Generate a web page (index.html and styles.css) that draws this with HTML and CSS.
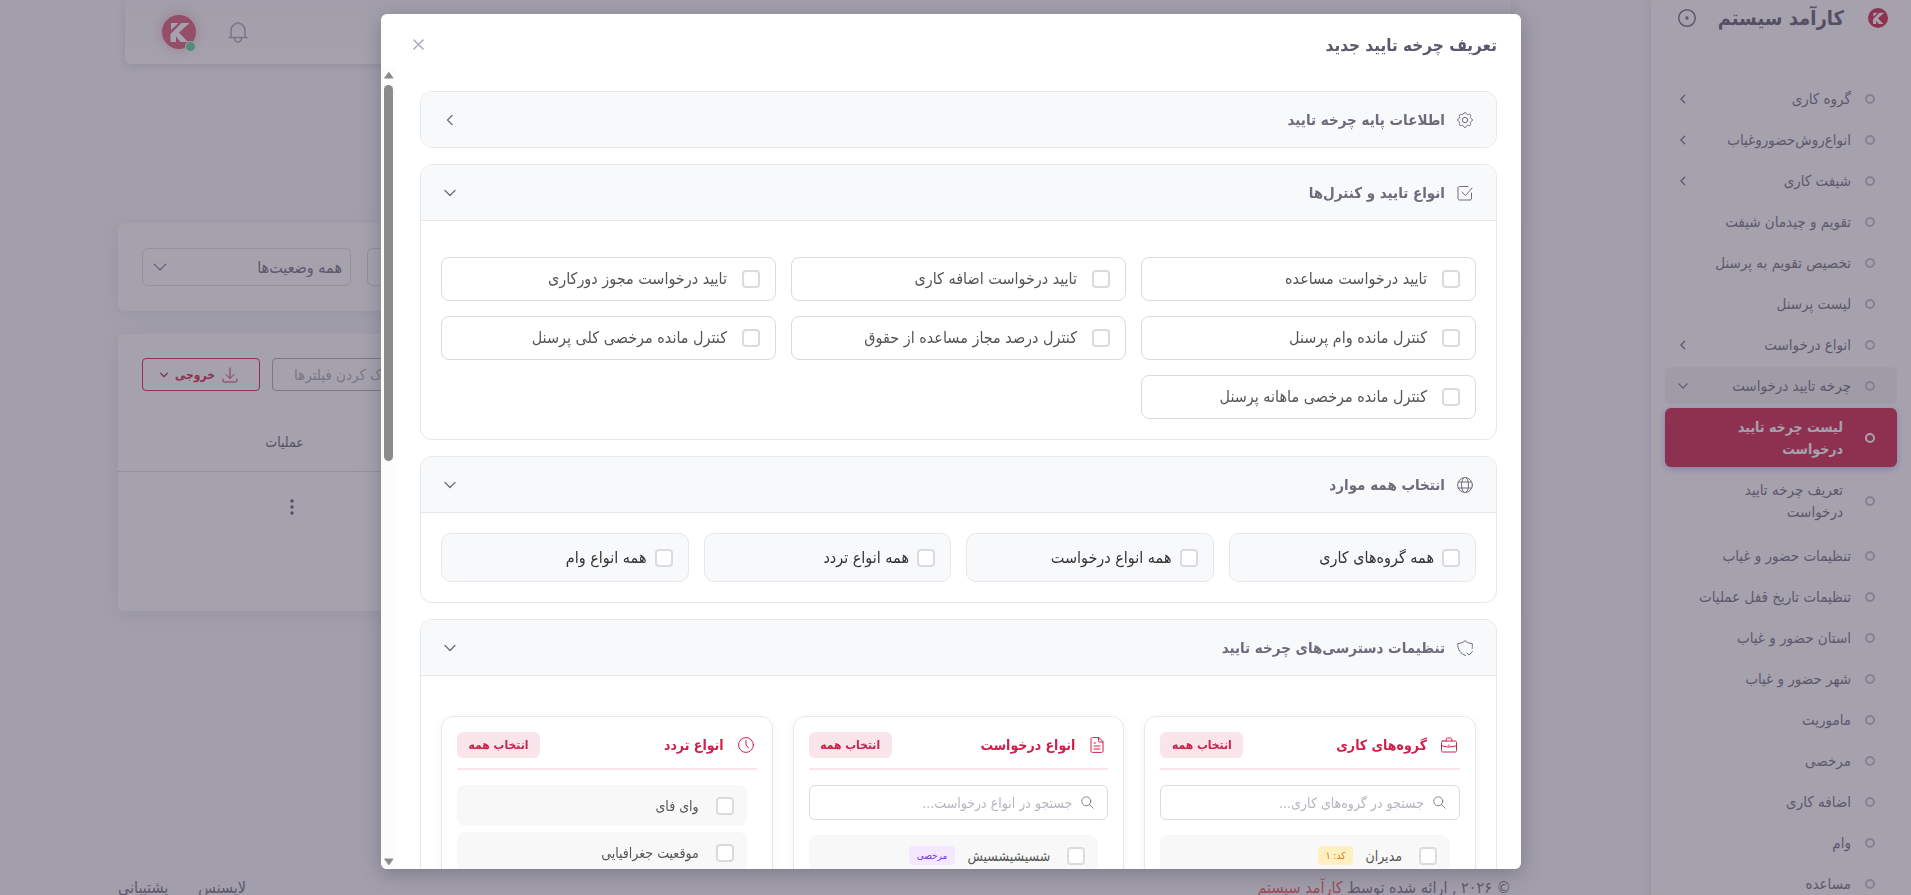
FILE: index.html
```html
<!DOCTYPE html>
<html lang="fa" dir="rtl">
<head>
  <meta charset="UTF-8" />
  <title>لیست چرخه تایید درخواست</title>
  <link rel="stylesheet" href="styles.css">
</head>
<body>
  <svg class="sprite" aria-hidden="true">
    <symbol id="chev-left" viewBox="0 0 12 12"><path d="M8 1.5 3.5 6 8 10.5" /></symbol>
    <symbol id="chev-down" viewBox="0 0 12 12"><path d="M1 3.5 6 8.5 11 3.5" /></symbol>
    <symbol id="search" viewBox="0 0 16 16"><circle cx="6.5" cy="6.5" r="5.5" /><path d="M10.5 10.5 15 15" /></symbol>
    <symbol id="logo" viewBox="0 0 34 34">
      <circle cx="17" cy="17" r="17" fill="#d01f48" />
      <path fill="#fff" d="M9 8h7.5L9 15zM19.500 8h8L17 17.5l9 9.500h-7.5L14 21.5V27H8.5v-8z" />
    </symbol>
  </svg>

  <div class="layout">
    <aside class="sidebar">
      <div class="app-brand">
        <svg class="brand-logo"><use href="#logo" /></svg>
        <span class="brand-text">کارآمد سیستم</span>
        <button class="menu-toggle" aria-label="منو">
          <svg viewBox="0 0 20 20"><circle cx="10" cy="10" r="8.3" /><circle class="dot" cx="10" cy="10" r="1.7" /></svg>
        </button>
      </div>
      <nav class="menu">
        <a class="menu-item" href="#"><i></i><span>گروه کاری</span><svg><use href="#chev-left" /></svg></a>
        <a class="menu-item" href="#"><i></i><span>انواع‌روش‌حضوروغیاب</span><svg><use href="#chev-left" /></svg></a>
        <a class="menu-item" href="#"><i></i><span>شیفت کاری</span><svg><use href="#chev-left" /></svg></a>
        <a class="menu-item" href="#"><i></i><span>تقویم و چیدمان شیفت</span></a>
        <a class="menu-item" href="#"><i></i><span>تخصیص تقویم به پرسنل</span></a>
        <a class="menu-item" href="#"><i></i><span>لیست پرسنل</span></a>
        <a class="menu-item" href="#"><i></i><span>انواع درخواست</span><svg><use href="#chev-left" /></svg></a>
        <a class="menu-item open" href="#"><i></i><span>چرخه تایید درخواست</span><svg><use href="#chev-down" /></svg></a>
        <a class="menu-item sub active" href="#"><i></i><span>لیست چرخه تایید درخواست</span></a>
        <a class="menu-item sub" href="#"><i></i><span>تعریف چرخه تایید درخواست</span></a>
        <a class="menu-item" href="#"><i></i><span>تنظیمات حضور و غیاب</span></a>
        <a class="menu-item" href="#"><i></i><span>تنظیمات تاریخ قفل عملیات</span></a>
        <a class="menu-item" href="#"><i></i><span>استان حضور و غیاب</span></a>
        <a class="menu-item" href="#"><i></i><span>شهر حضور و غیاب</span></a>
        <a class="menu-item" href="#"><i></i><span>ماموریت</span></a>
        <a class="menu-item" href="#"><i></i><span>مرخصی</span></a>
        <a class="menu-item" href="#"><i></i><span>اضافه کاری</span></a>
        <a class="menu-item" href="#"><i></i><span>وام</span></a>
        <a class="menu-item" href="#"><i></i><span>مساعده</span></a>
      </nav>
    </aside>

    <div class="page">
      <header class="topbar">
        <button class="bell" aria-label="اعلان‌ها">
          <svg viewBox="0 0 20 22"><path d="M1 16.5h18M3 16.5V9.5C3 5.5 6 3 8.5 2.6 9 1.2 11 1.2 11.5 2.6 14 3 17 5.5 17 9.5v7M6.5 17c.3 5.2 6.7 5.2 7 0" /></svg>
        </button>
        <div class="avatar">
          <svg><use href="#logo" /></svg>
          <span class="online"></span>
        </div>
      </header>

      <main>
        <section class="card filters">
          <select class="status-select" aria-label="نوع"><option></option></select>
          <div class="select-wrap">
            <select class="status-select" aria-label="وضعیت"><option>همه وضعیت‌ها</option></select>
            <svg><use href="#chev-down" /></svg>
          </div>
        </section>

        <section class="card table-card">
          <div class="toolbar">
            <button class="btn btn-clear">پاک کردن فیلترها</button>
            <button class="btn btn-export">
              <svg class="download" viewBox="0 0 16 16"><path d="M8 1v10M4 7.5 8 11.5l4-4M1 12v1.5C1 14.5 1.5 15 2.5 15h11c1 0 1.5-.5 1.5-1.5V12" /></svg>
              خروجی
              <svg class="caret"><use href="#chev-down" /></svg>
            </button>
          </div>
          <table class="list">
            <thead><tr><th></th><th>عملیات</th></tr></thead>
            <tbody><tr><td></td><td><button class="dots" aria-label="عملیات"><svg viewBox="0 0 4 16"><circle cx="2" cy="2" r="1.7" /><circle cx="2" cy="8" r="1.7" /><circle cx="2" cy="14" r="1.7" /></svg></button></td></tr></tbody>
          </table>
        </section>
      </main>

      <footer class="footer">
        <div>© ۲۰۲۶ , ارائه شده توسط <a class="company" href="#">کارآمد سیستم</a></div>
        <div class="footer-links"><a href="#">لایسنس</a><a href="#">پشتیبانی</a></div>
      </footer>
    </div>
  </div>

  <div class="overlay">
    <div class="modal" role="dialog" aria-labelledby="modalTitle">
      <div class="modal-header">
        <h2 id="modalTitle">تعریف چرخه تایید جدید</h2>
        <button class="close" aria-label="بستن"><svg viewBox="0 0 12 12"><path d="M1 1l10 10M11 1 1 11" /></svg></button>
      </div>

      <div class="modal-main">
        <div class="modal-body">
          <section class="panel">
            <button class="panel-head">
              <svg class="head-icon" viewBox="0 0 16 16"><circle cx="8" cy="8" r="2.7" /><path d="M6.5 1.7C7 .2 9 .2 9.5 1.7c.3.9 1.2 1.2 2 .8 1.4-.7 2.7.6 2 2-.4.8-.1 1.7.8 2 1.5.5 1.5 2.5 0 3-.9.3-1.2 1.2-.8 2 .7 1.4-.6 2.7-2 2-.8-.4-1.7-.1-2 .8-.5 1.5-2.5 1.5-3 0-.3-.9-1.2-1.2-2-.8-1.4.7-2.7-.6-2-2 .4-.8.1-1.7-.8-2-1.5-.5-1.5-2.5 0-3 .9-.3 1.2-1.2.8-2-.7-1.4.6-2.7 2-2 .8.4 1.7.1 2-.8z" /></svg>
              <span>اطلاعات پایه چرخه تایید</span>
              <svg class="arrow"><use href="#chev-left" /></svg>
            </button>
          </section>

          <section class="panel">
            <button class="panel-head">
              <svg class="head-icon" viewBox="0 0 16 16"><path d="M11 1.5H2.5c-1 0-1.5.5-1.5 1.5v10.5c0 1 .5 1.5 1.5 1.5H13c1 0 1.500-.5 1.500-1.5V8M5 7l3.5 3.5L15 3" /></svg>
              <span>انواع تایید و کنترل‌ها</span>
              <svg class="arrow"><use href="#chev-down" /></svg>
            </button>
            <div class="panel-body spaced checks">
              <label class="check"><input type="checkbox"><span>تایید درخواست مساعده</span></label>
              <label class="check"><input type="checkbox"><span>تایید درخواست اضافه کاری</span></label>
              <label class="check"><input type="checkbox"><span>تایید درخواست مجوز دورکاری</span></label>
              <label class="check"><input type="checkbox"><span>کنترل مانده وام پرسنل</span></label>
              <label class="check"><input type="checkbox"><span>کنترل درصد مجاز مساعده از حقوق</span></label>
              <label class="check"><input type="checkbox"><span>کنترل مانده مرخصی کلی پرسنل</span></label>
              <label class="check"><input type="checkbox"><span>کنترل مانده مرخصی ماهانه پرسنل</span></label>
            </div>
          </section>

          <section class="panel">
            <button class="panel-head">
              <svg class="head-icon" viewBox="0 0 16 16"><circle cx="8" cy="8" r="7.4" /><path d="M1.500 5h13M1.500 11h13M6.500 .8C3.800 5 3.800 11 6.500 15.200M9.500 .8C12.200 5 12.200 11 9.500 15.200" /></svg>
              <span>انتخاب همه موارد</span>
              <svg class="arrow"><use href="#chev-down" /></svg>
            </button>
            <div class="panel-body all-grid">
              <label class="check-all"><input type="checkbox"><span>همه گروه‌های کاری</span></label>
              <label class="check-all"><input type="checkbox"><span>همه انواع درخواست</span></label>
              <label class="check-all"><input type="checkbox"><span>همه انواع تردد</span></label>
              <label class="check-all"><input type="checkbox"><span>همه انواع وام</span></label>
            </div>
          </section>

          <section class="panel">
            <button class="panel-head">
              <svg class="head-icon" viewBox="0 0 16 16"><path d="M8.5 15.5C3.5 14 .3 9 .8 3.5 3.500 3.5 6 2.5 8 .7c2 1.8 4.500 2.8 7.200 2.8.3 2.5 .2 3.500 0 5M10 13l2 2 3.5-3.5" /></svg>
              <span>تنظیمات دسترسی‌های چرخه تایید</span>
              <svg class="arrow"><use href="#chev-down" /></svg>
            </button>
            <div class="panel-body access">
              <div class="access-card">
                <div class="access-head">
                  <svg viewBox="0 0 16 16"><path d="M2 4h12c1 0 1.5.5 1.5 1.5v8c0 1-.5 1.5-1.5 1.5H2c-1 0-1.5-.5-1.5-1.5v-8C.5 4.5 1 4 2 4zM5 4c0-2 .5-3 1.5-3h3c1 0 1.5 1 1.5 3M.5 8.5c4.5 2 10.5 2 15 0M8 8v.6" /></svg>
                  <h3>گروه‌های کاری</h3>
                  <button class="select-all">انتخاب همه</button>
                </div>
                <div class="search">
                  <svg><use href="#search" /></svg>
                  <input type="text" aria-label="جستجو در گروه‌های کاری" placeholder="جستجو در گروه‌های کاری...">
                </div>
                <div class="rows">
                  <label class="row"><input type="checkbox"><span>مدیران</span><b class="tag code">کد: ۱</b></label>
                </div>
              </div>

              <div class="access-card">
                <div class="access-head">
                  <svg viewBox="0 0 16 16"><path d="M9.5.6H3.5C2.3.6 2 1 2 2v12c0 1 .4 1.4 1.5 1.4h9c1.1 0 1.5-.4 1.5-1.4V5zM9.5.6V3.5c0 1 .5 1.5 1.5 1.5h3M5 6h1.5M5 9h6M5 12h6" /></svg>
                  <h3>انواع درخواست</h3>
                  <button class="select-all">انتخاب همه</button>
                </div>
                <div class="search">
                  <svg><use href="#search" /></svg>
                  <input type="text" aria-label="جستجو در انواع درخواست" placeholder="جستجو در انواع درخواست...">
                </div>
                <div class="rows">
                  <label class="row"><input type="checkbox"><span>شسیشیشسیش</span><b class="tag leave">مرخصی</b></label>
                </div>
              </div>

              <div class="access-card">
                <div class="access-head">
                  <svg viewBox="0 0 16 16"><circle cx="8" cy="8" r="7.4" /><path d="M8 3.5V8l2.5 3" /></svg>
                  <h3>انواع تردد</h3>
                  <button class="select-all">انتخاب همه</button>
                </div>
                <div class="rows">
                  <label class="row"><input type="checkbox"><span>وای فای</span></label>
                  <label class="row"><input type="checkbox"><span>موقعیت جغرافیایی</span></label>
                </div>
              </div>
            </div>
          </section>
        </div>

        <div class="scrollbar" aria-hidden="true">
          <svg viewBox="0 0 10 8"><path d="M5 1 9 6.5H1z" /></svg>
          <div class="track"><div class="thumb"></div></div>
          <svg viewBox="0 0 10 8"><path d="M5 7 9 1.5H1z" /></svg>
        </div>
      </div>
    </div>
  </div>
</body>
</html>
```

FILE: styles.css
```css
* {
  box-sizing: border-box;
}

body {
  margin: 0;
  height: 100vh;
  overflow: hidden;
  background-color: #f8f7fa;
  color: #6f6b7d;
  font-family: "DejaVu Sans Condensed", "DejaVu Sans", sans-serif;
  font-size: 15px;
  line-height: 22px;
}

button, input, select {
  font-family: inherit;
  font-size: inherit;
  color: inherit;
}

button {
  border: none;
  background: none;
  padding: 0;
  cursor: pointer;
}

a {
  color: inherit;
  text-decoration: none;
}

svg {
  fill: none;
  stroke: currentColor;
  stroke-linecap: round;
  stroke-linejoin: round;
  flex-shrink: 0;
}

.sprite {
  display: none;
}

.layout {
  display: flex;
  height: 100vh;
}

/* sidebar */

.sidebar {
  width: 260px;
  flex-shrink: 0;
  background-color: #fff;
  box-shadow: 0 2px 8px rgba(75, 70, 92, 0.14);
  overflow: hidden;
}

.app-brand {
  display: flex;
  align-items: center;
  height: 36px;
  padding: 0 23px 0 26px;
  margin-bottom: 44px;
}

.brand-logo {
  width: 20px;
  height: 20px;
  stroke: none;
}

.brand-text {
  flex: 1;
  margin-right: 24px;
  color: #5d596c;
  font-size: 20px;
  font-weight: bold;
}

.menu-toggle svg {
  display: block;
  width: 20px;
  height: 20px;
  stroke-width: 1.5;
}

.menu-toggle .dot {
  fill: currentColor;
  stroke: none;
}

.menu {
  display: flex;
  flex-direction: column;
  gap: 4px;
  padding: 0 14px;
}

.menu-item {
  display: flex;
  align-items: center;
  min-height: 37px;
  padding: 0 22px 0 13px;
  border-radius: 6px;
}

.menu-item i {
  width: 10px;
  height: 10px;
  border: 2px solid #c0bdc8;
  border-radius: 50%;
  flex-shrink: 0;
}

.menu-item span {
  flex: 1;
  margin-right: 14px;
}

.menu-item svg {
  width: 10px;
  height: 10px;
  stroke-width: 1.5;
}

.menu-item.open {
  background-color: #f2f1f3;
}

.menu-item.sub {
  min-height: 59px;
  margin-bottom: 3px;
}

.menu-item.sub span {
  margin: 0 22px 0 40px;
}

.menu-item.active {
  margin-bottom: 0;
  background-color: #d01a42;
  color: #fff;
  font-size: 14px;
  font-weight: bold;
  box-shadow: 0 2px 6px rgba(115, 103, 240, 0.48);
}

.menu-item.active i {
  border-color: #fff;
}

/* page behind the dialog */

.page {
  flex: 1;
  display: flex;
  flex-direction: column;
  padding: 0 140px 0 118px;
}

.topbar {
  display: flex;
  justify-content: flex-end;
  align-items: center;
  gap: 32px;
  height: 64px;
  flex-shrink: 0;
  margin-left: 7px;
  padding-left: 37px;
  background-color: #fff;
  background-image: linear-gradient(#f8f7fa, #fff);
  border-radius: 0 0 6px 6px;
  box-shadow: 0 2px 8px rgba(75, 70, 92, 0.18);
}

.bell svg {
  display: block;
  width: 20px;
  height: 22px;
  color: #a5a2ad;
  stroke-width: 1.5;
}

.avatar {
  position: relative;
  width: 34px;
  height: 34px;
  border-radius: 50%;
  box-shadow: 0 0 14px rgba(208, 31, 72, 0.45);
  opacity: 0.75;
}

.avatar svg {
  display: block;
  width: 34px;
  height: 34px;
  stroke: none;
}

.online {
  position: absolute;
  right: 0;
  bottom: -3px;
  width: 11px;
  height: 11px;
  border: 1px solid #fff;
  border-radius: 50%;
  background-color: #28c76f;
}

.card {
  background-color: #fff;
  border-radius: 6px;
  box-shadow: 0 4px 18px rgba(75, 70, 92, 0.1);
}

.filters {
  display: flex;
  justify-content: flex-end;
  gap: 16px;
  margin-top: 159px;
  padding: 25px 24px;
}

.status-select {
  appearance: none;
  width: 209px;
  height: 38px;
  padding: 0 8px;
  border: 1px solid #dbdade;
  border-radius: 6px;
  background-color: #fff;
  font-size: 16px;
}

.select-wrap {
  position: relative;
}

.select-wrap svg {
  position: absolute;
  left: 11px;
  top: 12px;
  width: 14px;
  height: 14px;
}

.table-card {
  margin-top: 23px;
  height: 277px;
  padding-top: 24px;
}

.toolbar {
  display: flex;
  justify-content: flex-end;
  gap: 12px;
  padding-left: 24px;
}

.btn {
  display: flex;
  align-items: center;
  justify-content: center;
  gap: 7px;
  height: 33px;
  border: 1px solid #a8aaae;
  border-radius: 4px;
}

.btn-clear {
  padding: 0 21px;
  color: #a8aaae;
}

.btn-export {
  width: 118px;
  padding-right: 4px;
  border-color: #d01a42;
  color: #d01a42;
  font-size: 12px;
  font-weight: bold;
}

.download {
  width: 16px;
  height: 16px;
}

.caret {
  width: 8px;
  height: 8px;
  stroke-width: 2;
}

.list {
  width: 100%;
  margin-top: 23px;
  border-collapse: collapse;
}

.list th {
  height: 57px;
  padding: 0;
  border-bottom: 1px solid #dbdade;
  color: #5d596c;
  font-size: 14px;
  font-weight: normal;
}

.list td {
  height: 77px;
  padding: 0;
  text-align: center;
}

.list th:last-child {
  width: 333px;
}

.list td:last-child .dots {
  margin-left: 14px;
}

.dots svg {
  display: block;
  width: 4px;
  height: 16px;
  fill: #5d596c;
  stroke: none;
}

.footer {
  display: flex;
  justify-content: space-between;
  margin-top: 266px;
  font-size: 16px;
  white-space: nowrap;
}

.company {
  color: #ea5455;
}

.footer-links {
  display: flex;
  gap: 30px;
}

/* dialog */

.overlay {
  position: fixed;
  inset: 0;
  display: flex;
  justify-content: center;
  padding: 14px 9px 26px 0;
  background-color: rgba(75, 70, 92, 0.5);
}

.modal {
  display: flex;
  flex-direction: column;
  width: 1140px;
  background-color: #fff;
  border-radius: 6px;
  box-shadow: 0 5px 20px rgba(75, 70, 92, 0.4);
  overflow: hidden;
}

.modal-header {
  display: flex;
  justify-content: space-between;
  align-items: center;
  height: 53px;
  padding: 8px 24px 0 32px;
  flex-shrink: 0;
}

.modal-header h2 {
  margin: 0;
  color: #5d596c;
  font-size: 17px;
}

.close svg {
  display: block;
  width: 11px;
  height: 11px;
  color: #a8a5b2;
  stroke-width: 1.5;
}

.modal-main {
  display: flex;
  flex: 1;
  min-height: 0;
}

.modal-body {
  flex: 1;
  padding: 24px;
  overflow: hidden;
}

.scrollbar {
  display: flex;
  flex-direction: column;
  align-items: center;
  gap: 5px;
  width: 15px;
  padding: 4px 0 3px;
  background-color: #fcfcfc;
}

.scrollbar svg {
  width: 10px;
  height: 9px;
  fill: #8b8b8b;
  stroke: #8b8b8b;
}

.track {
  flex: 1;
}

.thumb {
  width: 9px;
  height: 49%;
  border-radius: 5px;
  background-color: #8b8b8b;
}

.panel {
  margin-bottom: 16px;
  border: 1px solid #e7e7e9;
  border-radius: 12px;
  overflow: hidden;
}

.panel-head {
  display: flex;
  align-items: center;
  gap: 12px;
  width: 100%;
  height: 55px;
  padding: 0 23px;
  background-color: #f8f9fb;
  text-align: right;
}

.panel-head span {
  flex: 1;
  font-weight: bold;
}

.head-icon {
  width: 16px;
  height: 16px;
}

.arrow {
  width: 12px;
  height: 12px;
  stroke-width: 1.3;
}

.panel-body {
  display: grid;
  padding: 20px;
  border-top: 1px solid #e7e7e9;
}

.spaced {
  padding-top: 36px;
}

.checks {
  grid-template-columns: repeat(3, 1fr);
  gap: 15px;
}

.check,
.check-all {
  display: flex;
  align-items: center;
  padding: 0 15px;
  border: 1px solid #dbdade;
  font-size: 16px;
  cursor: pointer;
}

.check {
  gap: 15px;
  height: 44px;
  border-radius: 8px;
  color: #555;
}

.all-grid {
  grid-template-columns: repeat(4, 1fr);
  gap: 15px;
}

.check-all {
  gap: 8px;
  height: 49px;
  border-color: #e7e7e9;
  border-radius: 10px;
  background-color: #f8f9fb;
  color: #333;
}

input[type="checkbox"] {
  appearance: none;
  width: 18px;
  height: 18px;
  margin: 0;
  border: 2px solid #dbdade;
  border-radius: 4px;
  background-color: #fff;
  flex-shrink: 0;
}

.access {
  grid-template-columns: repeat(3, 1fr);
  gap: 20px;
  padding-top: 40px;
}

.access-card {
  height: 400px;
  padding: 15px;
  border: 1px solid #e7e7e9;
  border-radius: 12px;
  box-shadow: 0 2px 8px rgba(0, 0, 0, 0.05);
}

.access-head {
  display: flex;
  align-items: center;
  padding-bottom: 10px;
  margin-bottom: 15px;
  border-bottom: 2px solid #f9e5ea;
  color: #d01f48;
}

.access-head svg {
  width: 16px;
  height: 16px;
  margin-right: 3px;
}

.access-head h3 {
  flex: 1;
  margin: 0 14px 0 0;
  font-size: 14px;
}

.select-all {
  width: 83px;
  height: 26px;
  border-radius: 6px;
  background-color: #f9e5ea;
  font-size: 12px;
  font-weight: bold;
}

.search {
  display: flex;
  align-items: center;
  gap: 9px;
  height: 35px;
  margin-bottom: 15px;
  padding: 0 13px;
  border: 1px solid #dbdade;
  border-radius: 6px;
}

.search svg {
  width: 13px;
  height: 13px;
}

.search input {
  flex: 1;
  min-width: 0;
  padding: 0;
  border: none;
  outline: none;
  font-size: 14px;
}

.search input::placeholder {
  color: #b7b5be;
}

.rows {
  display: flex;
  flex-direction: column;
  gap: 6px;
  padding-right: 10px;
}

.row {
  display: flex;
  align-items: center;
  height: 41px;
  padding: 0 13px;
  border-radius: 8px;
  background-color: #f8f8f8;
  color: #555;
  font-size: 14px;
  cursor: pointer;
}

.row span {
  margin-right: 17px;
}

.tag {
  height: 19px;
  margin-right: 12px;
  padding: 0 8px;
  border-radius: 4px;
  font-size: 10px;
  font-weight: normal;
  line-height: 19px;
}

.code {
  background-color: #fff0c2;
  color: #d97706;
}

.leave {
  background-color: #f3e8ff;
  color: #7c3aed;
}
```
